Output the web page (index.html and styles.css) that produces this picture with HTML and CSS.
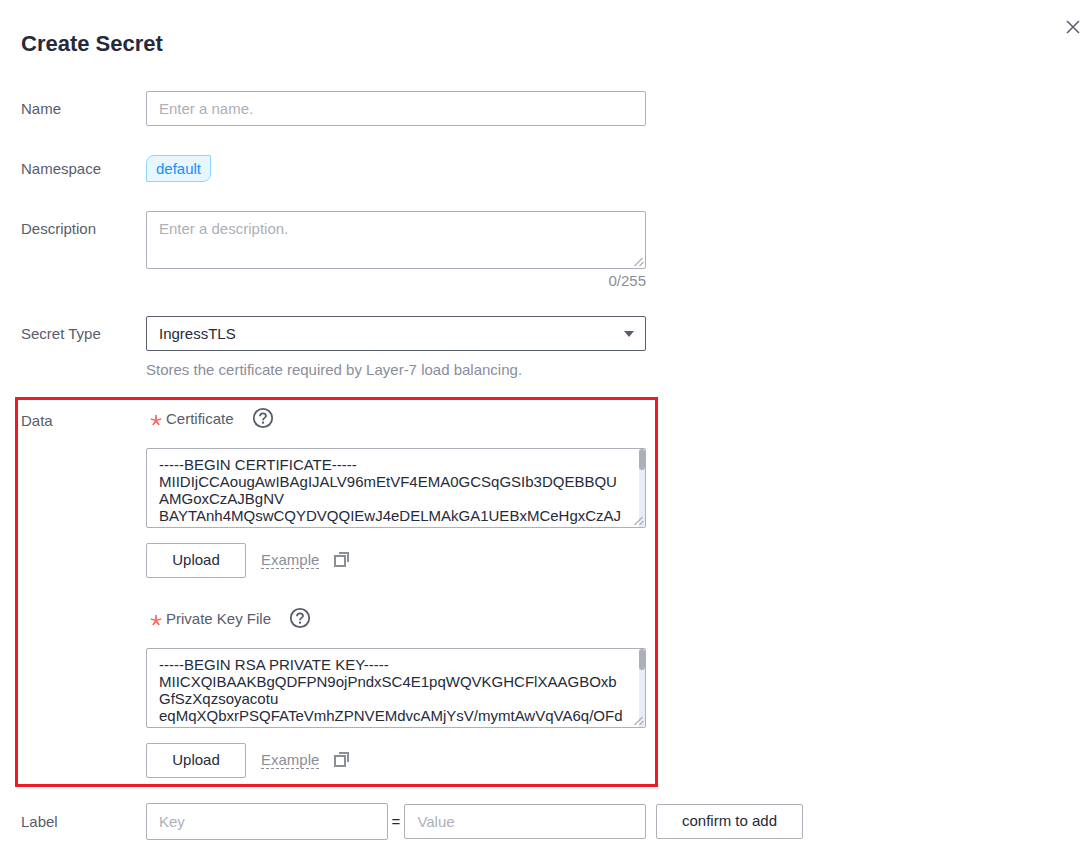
FILE: index.html
```html
<!DOCTYPE html>
<html lang="en">
<head>
  <meta charset="UTF-8">
  <meta name="viewport" content="width=device-width, initial-scale=1">
  <title>Create Secret</title>
  <link rel="stylesheet" href="styles.css">
</head>
<body>

<button type="button" class="close-btn" aria-label="Close">
  <svg width="14" height="14" viewBox="0 0 14 14"><path d="M1 1L13 13M13 1L1 13" fill="none" stroke="#575d6c" stroke-width="1.5"/></svg>
</button>

<form class="secret-form">
  <h1>Create Secret</h1>

  <div class="row">
    <label class="row-label" for="name">Name</label>
    <div class="row-content">
      <input class="field" id="name" type="text" placeholder="Enter a name.">
    </div>
  </div>

  <div class="row">
    <span class="row-label">Namespace</span>
    <div class="row-content tag-line">
      <span class="tag">default</span>
    </div>
  </div>

  <div class="row">
    <label class="row-label" for="description">Description</label>
    <div class="row-content">
      <div class="area">
        <textarea class="field area-small" id="description" placeholder="Enter a description."></textarea>
        <svg class="grip" width="10" height="10" viewBox="0 0 10 10"><path d="M0.5 9L8.5 1M5.5 9L9.5 5" fill="none" stroke="#adb0b8" stroke-width="1.2"/></svg>
      </div>
      <div class="count">0/255</div>
    </div>
  </div>

  <div class="row row-type">
    <label class="row-label" for="type">Secret Type</label>
    <div class="row-content">
      <select class="field select" id="type">
        <option>IngressTLS</option>
      </select>
      <p class="hint">Stores the certificate required by Layer-7 load balancing.</p>
    </div>
  </div>

  <div class="data-box">
    <span class="row-label">Data</span>
    <div class="row-content">

      <div class="data-item">
        <div class="data-head">
          <svg class="star" width="12" height="12" viewBox="0 0 12 12"><path d="M6 6.5V1M6 6.5L0.8 5M6 6.5L11.2 5M6 6.5L2.8 11M6 6.5L9.2 11" fill="none" stroke="#f66f6a" stroke-width="1.8"/></svg>
          <label for="cert">Certificate</label>
          <button type="button" class="help" aria-label="Certificate help">
            <svg width="22" height="22" viewBox="0 0 22 22"><g fill="none" stroke="#575d6c" stroke-width="1.8"><circle cx="11" cy="11" r="9.2"/><path d="M8 9.2C8 7.3 9.2 6.3 11 6.3S14 7.4 14 8.9C14 10.8 11 11 11 13.2"/></g><rect x="10" y="14.6" width="2" height="2" fill="#575d6c"/></svg>
          </button>
        </div>
        <div class="area">
          <textarea class="field area-large" id="cert" spellcheck="false">
-----BEGIN CERTIFICATE-----
MIIDIjCCAougAwIBAgIJALV96mEtVF4EMA0GCSqGSIb3DQEBBQUAMGoxCzAJBgNV
BAYTAnh4MQswCQYDVQQIEwJ4eDELMAkGA1UEBxMCeHgxCzAJ</textarea>
          <span class="scroll-track"><span class="scroll-thumb"></span></span>
          <svg class="grip" width="10" height="10" viewBox="0 0 10 10"><path d="M0.5 9L8.5 1M5.5 9L9.5 5" fill="none" stroke="#adb0b8" stroke-width="1.2"/></svg>
        </div>
        <div class="actions">
          <button type="button" class="btn">Upload</button>
          <a class="example" href="#">Example</a>
          <button type="button" class="copy" aria-label="Copy certificate example">
            <svg width="15" height="15" viewBox="0 0 15 15"><g fill="none" stroke="#8a8e99" stroke-width="2"><path d="M1 4H11V14H1Z"/><path d="M5 1H14V10" /></g></svg>
          </button>
        </div>
      </div>

      <div class="data-item">
        <div class="data-head">
          <svg class="star" width="12" height="12" viewBox="0 0 12 12"><path d="M6 6.5V1M6 6.5L0.8 5M6 6.5L11.2 5M6 6.5L2.8 11M6 6.5L9.2 11" fill="none" stroke="#f66f6a" stroke-width="1.8"/></svg>
          <label for="key-file">Private Key File</label>
          <button type="button" class="help" aria-label="Private key help">
            <svg width="22" height="22" viewBox="0 0 22 22"><g fill="none" stroke="#575d6c" stroke-width="1.8"><circle cx="11" cy="11" r="9.2"/><path d="M8 9.2C8 7.3 9.2 6.3 11 6.3S14 7.4 14 8.9C14 10.8 11 11 11 13.2"/></g><rect x="10" y="14.6" width="2" height="2" fill="#575d6c"/></svg>
          </button>
        </div>
        <div class="area">
          <textarea class="field area-large" id="key-file" spellcheck="false">
-----BEGIN RSA PRIVATE KEY-----
MIICXQIBAAKBgQDFPN9ojPndxSC4E1pqWQVKGHCFlXAAGBOxbGfSzXqzsoyacotu
eqMqXQbxrPSQFATeVmhZPNVEMdvcAMjYsV/mymtAwVqVA6q/OFd</textarea>
          <span class="scroll-track"><span class="scroll-thumb"></span></span>
          <svg class="grip" width="10" height="10" viewBox="0 0 10 10"><path d="M0.5 9L8.5 1M5.5 9L9.5 5" fill="none" stroke="#adb0b8" stroke-width="1.2"/></svg>
        </div>
        <div class="actions">
          <button type="button" class="btn">Upload</button>
          <a class="example" href="#">Example</a>
          <button type="button" class="copy" aria-label="Copy key example">
            <svg width="15" height="15" viewBox="0 0 15 15"><g fill="none" stroke="#8a8e99" stroke-width="2"><path d="M1 4H11V14H1Z"/><path d="M5 1H14V10" /></g></svg>
          </button>
        </div>
      </div>

    </div>
  </div>

  <div class="label-row">
    <label class="row-label" for="label-key">Label</label>
    <div class="pair">
      <input class="field key-field" id="label-key" type="text" placeholder="Key">
      <span>=</span>
      <input class="field" type="text" placeholder="Value" aria-label="Value">
    </div>
    <button type="button" class="btn btn-wide">confirm to add</button>
  </div>
</form>

</body>
</html>
```
FILE: styles.css
```css
* {
  box-sizing: border-box;
}

body {
  margin: 0;
  background: #fff;
  color: #252b3a;
  font-family: "Liberation Sans", Arial, sans-serif;
  font-size: 15px;
}

button, input, select, textarea {
  font: inherit;
  color: inherit;
}

button {
  padding: 0;
  border: none;
  background: none;
  cursor: pointer;
}

svg {
  display: block;
}

.close-btn {
  position: absolute;
  top: 20px;
  right: 12px;
}

.secret-form {
  padding: 30px 21px 15px;
}

h1 {
  margin: 0 0 33px;
  font-size: 22px;
  line-height: 28px;
}

.row {
  display: flex;
  margin-bottom: 25px;
}

.row-type {
  margin-bottom: 16px;
}

.row-label {
  flex: 0 0 125px;
  line-height: 35px;
  color: #575d6c;
}

.row-content {
  flex: 1;
  max-width: 500px;
}

.field {
  display: block;
  width: 100%;
  height: 35px;
  padding: 0 12px;
  border: 1px solid #adb0b8;
  border-radius: 2px;
  background: #fff;
  outline: none;
}

.field::placeholder {
  color: #adb0b8;
}

.area {
  position: relative;
}

textarea.field {
  padding: 8px 12px;
  line-height: 17px;
  word-break: break-all;
  resize: none;
}

textarea.area-small {
  height: 58px;
}

textarea.area-large {
  height: 80px;
  padding: 7px 20px 0 12px;
  scrollbar-width: none;
}

/* thin scrollbar and resize grip drawn over the textarea */
.scroll-track {
  position: absolute;
  top: 1px;
  right: 1px;
  bottom: 1px;
  width: 6px;
  background: #e9edfa;
}

.scroll-thumb {
  display: block;
  height: 21px;
  border-radius: 3px;
  background: #adb0b8;
}

.grip {
  position: absolute;
  right: 2px;
  bottom: 2px;
  pointer-events: none;
}

.tag-line {
  display: flex;
  align-items: center;
}

.tag {
  padding: 0 9px;
  border: 1px solid #91d5ff;
  border-radius: 8px 0;
  background: #e6f7ff;
  color: #1890ff;
  line-height: 25px;
}

.count {
  line-height: 22px;
  padding-top: 1px;
  margin-bottom: -1px;
  text-align: right;
  color: #8a8e99;
}

.select {
  appearance: none;
  border-color: #575d6c;
  background: #fff url("data:image/svg+xml,%3Csvg xmlns='http://www.w3.org/2000/svg' width='10' height='6'%3E%3Cpath d='M0 0H10L5 6Z' fill='%23575d6c'/%3E%3C/svg%3E") no-repeat right 11px center;
}

.hint {
  margin: 8px 0 0;
  line-height: 22px;
  color: #8a8e99;
}

/* highlighted block, its text stays in line with the other rows */
.data-box {
  display: flex;
  max-width: 643px;
  margin: 0 -6px 16px;
  padding: 0 9px 6px 3px;
  border: 3px solid #ed1c24;
}

.data-box .row-label {
  padding-top: 3px;
}

.data-item + .data-item {
  margin-top: 22px;
}

.data-head {
  display: flex;
  align-items: center;
  height: 36px;
  margin-bottom: 12px;
  color: #575d6c;
}

.star {
  margin: 3px 4px 0;
}

.help {
  margin-left: 18px;
}

.actions {
  display: flex;
  align-items: center;
  gap: 15px;
  margin-top: 15px;
}

.btn {
  width: 100px;
  height: 35px;
  padding-bottom: 2px;
  border: 1px solid #adb0b8;
  border-radius: 2px;
  background: #fff;
}

.btn-wide {
  width: 147px;
}

.example,
.copy {
  margin-bottom: 2px;
}

.example {
  border-bottom: 1px dashed #8a8e99;
  color: #8a8e99;
  line-height: 17px;
  text-decoration: none;
}

.label-row {
  display: flex;
  align-items: center;
}

.pair {
  display: flex;
  flex: 1;
  align-items: center;
  gap: 4px;
  max-width: 500px;
  margin-right: 10px;
}

.key-field {
  height: 37px;
}
```
